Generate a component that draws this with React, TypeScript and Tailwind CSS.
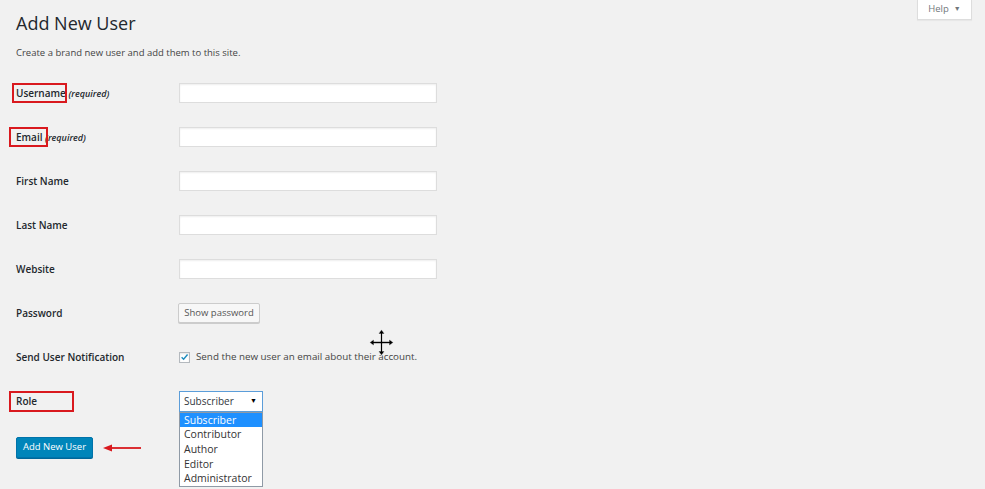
import React from "react";

const labelCls = "w-[163px] shrink-0 text-[10px] font-semibold text-[#23282d]";
const inputCls =
  "w-[258px] h-[20px] bg-white border border-[#dddddd] shadow-[inset_0_1px_2px_rgba(0,0,0,0.07)]";

function Row({ children, label }: { children?: React.ReactNode; label: React.ReactNode }) {
  return (
    <div className="flex h-[44px] items-center">
      <div className={labelCls}>{label}</div>
      <div className="flex items-center">{children}</div>
    </div>
  );
}

function RedBox({ cls }: { cls: string }) {
  return <div className={"absolute border-2 border-[#d9191e] pointer-events-none " + cls} />;
}

export default function App() {
  return (
    <div className="relative w-[985px] h-[489px] overflow-hidden bg-[#f1f1f1] font-['Open_Sans',sans-serif] text-[#444]">
      <div className="flex justify-between">
        <div className="pl-[16px] pt-[11px]">
          <h1 className="text-[18px] leading-[24px] text-[#23282d]">Add New User</h1>
          <p className="mt-[12px] text-[9.5px] leading-[12px] text-[#444]">
            Create a brand new user and add them to this site.
          </p>
        </div>
        <div className="mr-[13px] flex h-[20px] w-[55px] items-center justify-center gap-[5px] border border-t-0 border-[#dddddd] bg-white text-[9.5px] text-[#72777c] shadow-[0_1px_1px_rgba(0,0,0,0.04)]">
          <span>Help</span>
          <span className="text-[7px]">▼</span>
        </div>
      </div>

      <div className="mt-[12px] pl-[16px]">
        <Row
          label={
            <span className="relative">
              Username <i className="text-[9px] font-semibold">(required)</i>
              <RedBox cls="left-[-4px] top-[-3px] w-[55px] h-[20px]" />
            </span>
          }
        >
          <div className={inputCls} />
        </Row>
        <Row
          label={
            <span className="relative">
              Email <i className="text-[9px] font-semibold">(required)</i>
              <RedBox cls="left-[-7px] top-[-3px] w-[39px] h-[20px]" />
            </span>
          }
        >
          <div className={inputCls} />
        </Row>
        <Row label="First Name">
          <div className={inputCls} />
        </Row>
        <Row label="Last Name">
          <div className={inputCls} />
        </Row>
        <Row label="Website">
          <div className={inputCls} />
        </Row>
        <Row label="Password">
          <button className="-ml-[1px] h-[20px] w-[82px] rounded-[2px] border border-[#cccccc] bg-[#f7f7f7] text-[9.5px] text-[#555] shadow-[0_1px_0_#cccccc]">
            Show password
          </button>
        </Row>
        <Row label="Send User Notification">
          <div className="flex items-center gap-[6px]">
            <div className="flex h-[11px] w-[11px] items-center justify-center border border-[#b4b9be] bg-white shadow-[inset_0_1px_2px_rgba(0,0,0,0.1)]">
              <svg width="10" height="10" viewBox="0 0 10 10">
                <path d="M1.8 5.2 L4 7.4 L8.4 2.2" fill="none" stroke="#1e8cbe" strokeWidth="1.6" />
              </svg>
            </div>
            <span className="text-[9.8px] text-[#444]">Send the new user an email about their account.</span>
          </div>
        </Row>
        <Row
          label={
            <span className="relative">
              Role
              <RedBox cls="left-[-7px] top-[-3px] w-[65px] h-[21px]" />
            </span>
          }
        >
          <div className="relative">
            <div className="flex h-[21px] w-[84px] items-center justify-between border border-[#5b9dd9] bg-white pl-[4px] pr-[5px] text-[10px] text-[#32373c]">
              <span>Subscriber</span>
              <span className="text-[7px] text-black">▼</span>
            </div>
            <div className="absolute left-0 top-[21px] z-10 w-[84px] border border-[#8f9aa6] bg-white text-[10.5px] leading-[14.7px] text-[#333]">
              <div className="bg-[#1e90ff] pl-[4px] text-white">Subscriber</div>
              <div className="pl-[4px]">Contributor</div>
              <div className="pl-[4px]">Author</div>
              <div className="pl-[4px]">Editor</div>
              <div className="pl-[4px]">Administrator</div>
            </div>
          </div>
        </Row>
        <div className="mt-[14px] flex items-center">
          <button className="h-[21px] w-[77px] rounded-[2px] border border-[#0073aa] bg-[#0085ba] text-[9.5px] text-white shadow-[0_1px_0_#006799]">
            Add New User
          </button>
          <svg className="ml-[10px]" width="40" height="8" viewBox="0 0 40 8">
            <path d="M8 4 L38 4" stroke="#d9191e" strokeWidth="1.8" />
            <path d="M0 4 L9 0.5 L9 7.5 Z" fill="#d9191e" />
          </svg>
        </div>
      </div>

      <svg className="absolute left-[369px] top-[329px]" width="25" height="27" viewBox="0 0 25 27">
        <g stroke="#fff" strokeWidth="3" fill="none">
          <path d="M12.5 3 V24 M3 13.5 H22" />
        </g>
        <g fill="#000" stroke="#fff" strokeWidth="0.8">
          <path d="M12.5 0.5 L16 5 L9 5 Z" />
          <path d="M12.5 26.5 L16 22 L9 22 Z" />
          <path d="M0.5 13.5 L5 10 L5 17 Z" />
          <path d="M24.5 13.5 L20 10 L20 17 Z" />
        </g>
        <path d="M12.5 4 V23 M4 13.5 H21" stroke="#000" strokeWidth="1.3" />
      </svg>
    </div>
  );
}
